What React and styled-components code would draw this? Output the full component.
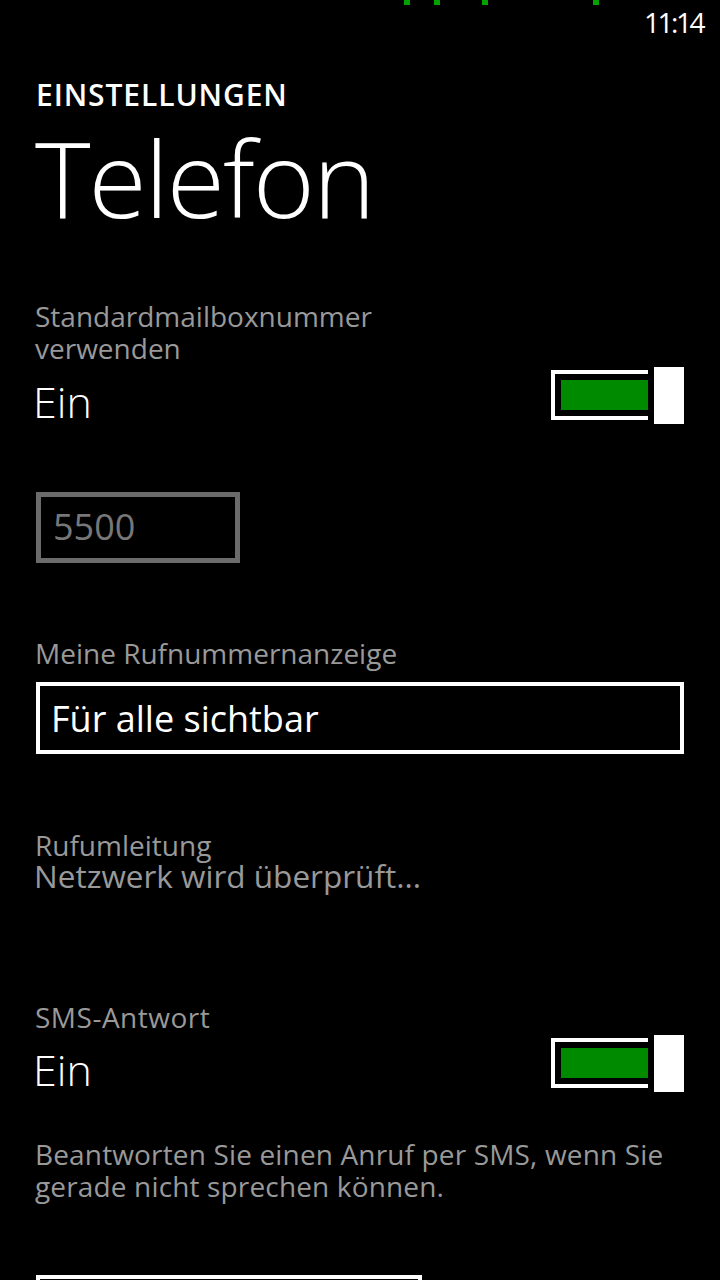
import styled, { createGlobalStyle } from 'styled-components';

const GlobalStyle = createGlobalStyle`
  html, body {
    margin: 0;
    padding: 0;
    background: #000;
    overflow: hidden;
  }
  body {
    font-family: "Open Sans", "Noto Sans", sans-serif;
    color: #fff;
  }
`;

const Screen = styled.div`
  width: 720px;
  height: 1280px;
  background: #000;
  overflow: hidden;
`;

const StatusBar = styled.div`
  position: relative;
  height: 48px;
  display: flex;
  align-items: flex-start;
  justify-content: flex-end;
  padding-right: 17px;
`;

const Signal = styled.div`
  position: absolute;
  top: 0;
  left: 0;
  display: flex;
`;

const Dot = styled.span`
  width: 6px;
  height: 5px;
  background: #00a300;
  margin-left: ${(p) => p.$gap}px;
`;

const Clock = styled.div`
  font-size: 28px;
  line-height: 40px;
  letter-spacing: -2.5px;
  padding-top: 2px;
`;

const Content = styled.div`
  padding: 0 36px;
`;

const Overline = styled.div`
  margin-top: 29px;
  font-size: 30px;
  line-height: 36px;
  font-weight: 600;
  letter-spacing: 0.9px;
`;

const Title = styled.h1`
  margin: 10px 0 0 -1px;
  font-size: 106px;
  line-height: 108px;
  font-weight: 300;
  letter-spacing: -2px;
`;

const Label = styled.div`
  margin: ${(p) => p.$top}px 0 0 -1px;
  font-size: 28px;
  line-height: 32px;
  color: #999;
  letter-spacing: ${(p) => p.$spacing || 0}px;
`;

const SubValue = styled.div`
  margin: -1px 0 0 -2px;
  font-size: 31.5px;
  line-height: 32px;
  color: #999;
`;

const ToggleRow = styled.div`
  margin-top: ${(p) => p.$top}px;
  display: flex;
  justify-content: space-between;
  align-items: flex-start;
`;

const State = styled.div`
  margin: 9px 0 0 -3px;
  font-size: 43px;
  line-height: 52px;
  font-weight: 300;
`;

const Toggle = styled.div`
  position: relative;
  width: 133px;
  height: 57px;
`;

const Track = styled.div`
  margin-top: 3px;
  width: 97px;
  height: 50px;
  box-sizing: border-box;
  border: 4px solid #fff;
  border-right: 0;
  padding: 6px 0 6px 6px;
`;

const Fill = styled.div`
  height: 100%;
  background: #008a00;
`;

const Thumb = styled.div`
  position: absolute;
  top: 0;
  left: 103px;
  width: 30px;
  height: 57px;
  background: #fff;
`;

const TextBox = styled.div`
  margin-top: 64px;
  width: 204px;
  height: 71px;
  box-sizing: border-box;
  border: 5px solid #6b6b6b;
  padding-left: 12px;
  font-size: 36px;
  line-height: 60px;
  color: #777;
`;

const Picker = styled.div`
  margin-top: 13px;
  height: 72px;
  box-sizing: border-box;
  border: 4px solid #fff;
  padding-left: 11px;
  font-size: 36px;
  line-height: 66px;
`;

const Hint = styled.p`
  margin: 42px 0 0 -1px;
  font-size: 28px;
  line-height: 32px;
  letter-spacing: 0.15px;
  color: #999;
`;

const Button = styled.div`
  margin-top: 73px;
  width: 386px;
  height: 72px;
  box-sizing: border-box;
  border: 4px solid #fff;
`;

const Switch = () => (
  <Toggle>
    <Track>
      <Fill />
    </Track>
    <Thumb />
  </Toggle>
);

export default function App() {
  return (
    <Screen>
      <GlobalStyle />
      <StatusBar>
        <Signal>
          <Dot $gap={404} />
          <Dot $gap={24} />
          <Dot $gap={42} />
          <Dot $gap={105} />
        </Signal>
        <Clock>11:14</Clock>
      </StatusBar>
      <Content>
        <Overline>EINSTELLUNGEN</Overline>
        <Title>Telefon</Title>

        <Label $top={69}>
          Standardmailboxnummer
          <br />
          verwenden
        </Label>
        <ToggleRow $top={3}>
          <State>Ein</State>
          <Switch />
        </ToggleRow>

        <TextBox>5500</TextBox>

        <Label $top={74}>Meine Rufnummernanzeige</Label>
        <Picker>Für alle sichtbar</Picker>

        <Label $top={75}>Rufumleitung</Label>
        <SubValue>Netzwerk wird überprüft...</SubValue>

        <Label $top={109} $spacing={0.5}>SMS-Antwort</Label>
        <ToggleRow $top={2}>
          <State>Ein</State>
          <Switch />
        </ToggleRow>

        <Hint>
          Beantworten Sie einen Anruf per SMS, wenn Sie
          <br />
          gerade nicht sprechen können.
        </Hint>

        <Button />
      </Content>
    </Screen>
  );
}
